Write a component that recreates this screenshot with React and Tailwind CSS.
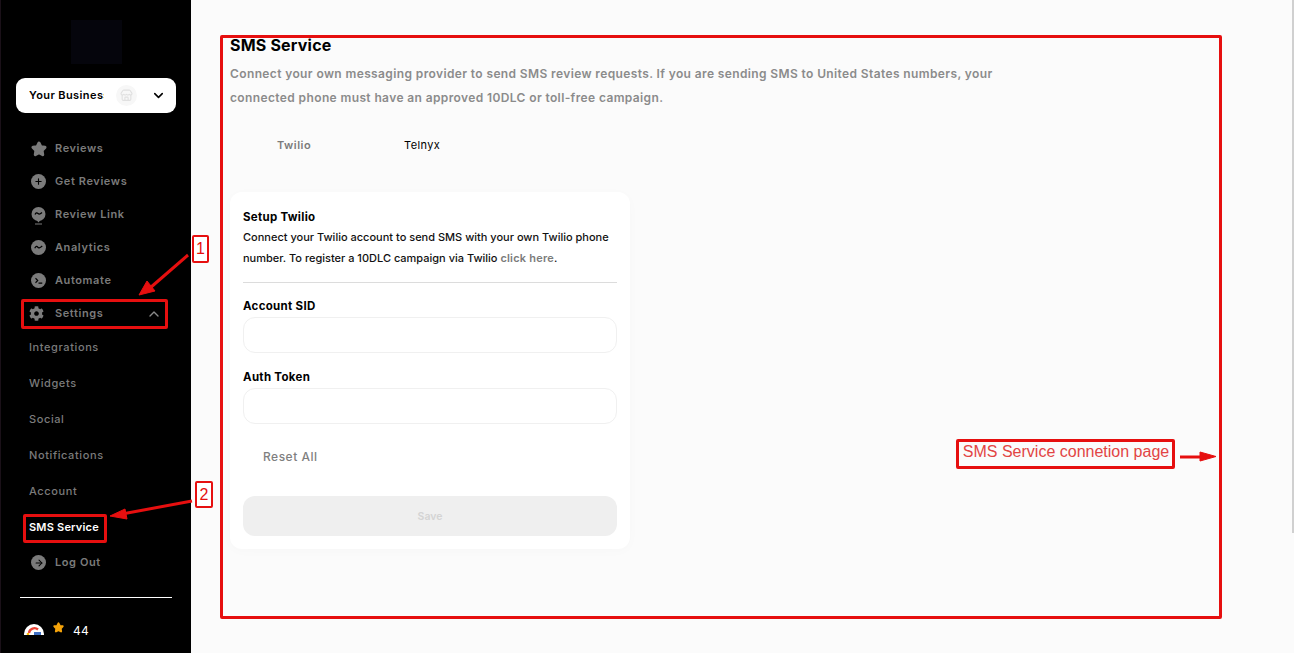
import React from "react";
import { ChevronDown, ChevronUp, Plus, ArrowRight, Store } from "lucide-react";
import { FaCog } from "react-icons/fa";

const font = "font-['Inter','Liberation_Sans',sans-serif]";

function Star({ size = 16, color = "#7b7b7b" }) {
  return (
    <svg width={size} height={size} viewBox="0 0 24 24">
      <path
        d="M12 3l2.800 5.500 6.200 1-4.400 4.500 1 6.500-5.600-2.900-5.600 2.900 1-6.500L3 9.500l6.200-1z"
        fill={color}
        stroke={color}
        strokeWidth="4.500"
        strokeLinejoin="round"
      />
    </svg>
  );
}

function Circle({ children }) {
  return (
    <span className="flex h-[15px] w-[15px] items-center justify-center rounded-full bg-[#7b7b7b] text-black">
      {children}
    </span>
  );
}

const wave = (
  <svg width="9" height="9" viewBox="0 0 12 12" fill="none" stroke="currentColor" strokeWidth="1.6">
    <path d="M1 7c1.500-3 3-3 4-1.500s2.500 1.500 6-1.500" />
  </svg>
);

const prompt = (
  <svg width="9" height="9" viewBox="0 0 12 12" fill="none" stroke="currentColor" strokeWidth="1.5">
    <path d="M2 3l3 3-3 3M6 9.500h5" />
  </svg>
);

// speech bubble with a small stem under it
const bubble = (
  <svg width="15" height="18" viewBox="0 0 15 18">
    <circle cx="7.500" cy="7" r="7" fill="#7b7b7b" />
    <path d="M5.500 13h4L7.500 15.500z" fill="#7b7b7b" />
    <path d="M4 17h7" stroke="#7b7b7b" strokeWidth="1" />
    <path d="M4 7.500c1-2 2-2 3-1s2 1 4-1" fill="none" stroke="#000" strokeWidth="1.200" />
  </svg>
);

const mainLinks = [
  { label: "Reviews", icon: <Star /> },
  { label: "Get Reviews", icon: <Circle><Plus size={9} strokeWidth={3} /></Circle> },
  { label: "Review Link", icon: bubble },
  { label: "Analytics", icon: <Circle>{wave}</Circle> },
  { label: "Automate", icon: <Circle>{prompt}</Circle> },
];

const subLinks = ["Integrations", "Widgets", "Social", "Notifications", "Account"];

function NavRow({ label, icon }) {
  return (
    <div className="flex h-[33px] items-center pl-[30px]">
      <span className="flex h-[15px] w-[24px] shrink-0 items-start">{icon}</span>
      <span className="text-[11px] font-semibold tracking-[0.6px] text-[#7b7b7b]">{label}</span>
    </div>
  );
}

function Sidebar() {
  return (
    <aside className="relative flex h-[653px] w-[191px] shrink-0 flex-col overflow-hidden border-l border-[#1a1018] bg-black">
      <div className="ml-[70px] mt-[20px] h-[44px] w-[51px] bg-[#05050c]" />
      <div className="ml-[15px] mt-[14px] flex h-[35px] w-[160px] items-center rounded-[9px] bg-white pl-[13px]">
        <span className="w-[75px] overflow-hidden whitespace-nowrap text-[11px] font-semibold tracking-[0.4px] text-black">
          Your Business
        </span>
        <span className="ml-[12px] flex h-[21px] w-[21px] items-center justify-center rounded-full bg-[#f7f7f7]">
          <Store size={13} className="text-[#e0e0e0]" />
        </span>
        <ChevronDown size={15} strokeWidth={2.5} className="ml-[14px] text-black" />
      </div>
      <nav className="mt-[19px] flex flex-col">
        {mainLinks.map((l) => (
          <NavRow key={l.label} {...l} />
        ))}
        <div className="flex h-[33px] items-center pl-[28px] pr-[29px]">
          <span className="flex w-[26px] shrink-0">
            <FaCog size={15} className="text-[#7b7b7b]" />
          </span>
          <span className="flex-1 text-[11px] font-semibold tracking-[0.6px] text-[#7b7b7b]">Settings</span>
          <ChevronUp size={16} strokeWidth={2} className="text-[#8a8a8a]" />
        </div>
        <div className="mt-[-2px] flex flex-col pl-[28px]">
          {subLinks.map((s) => (
            <div key={s} className="flex h-[36px] items-center pt-[3px] text-[11px] font-medium tracking-[0.6px] text-[#7b7b7b]">
              {s}
            </div>
          ))}
          <div className="flex h-[36px] items-center pt-[3px] text-[11px] font-semibold tracking-[0.2px] text-white">
            SMS Service
          </div>
        </div>
        <div className="mt-[2px]">
          <NavRow label="Log Out" icon={<Circle><ArrowRight size={10} strokeWidth={2.5} /></Circle>} />
        </div>
      </nav>
      <div className="ml-[19px] mt-[18px] h-px w-[152px] bg-white" />
      <div className="ml-[23px] mt-[26px] flex items-start">
        <div className="h-[11px] w-[20px] shrink-0 overflow-hidden">
          <svg width="20" height="20" viewBox="0 0 20 20" className="block">
            <circle cx="10" cy="10" r="10" fill="#fff" />
            <path d="M5 9a5.500 5.500 0 0 1 9-3.500" fill="none" stroke="#ea4335" strokeWidth="2.400" />
            <path d="M4 9v3" fill="none" stroke="#fbbc05" strokeWidth="2.400" />
            <rect x="10" y="8" width="7" height="3" fill="#3f6fc4" />
          </svg>
        </div>
        <span className="ml-[9px] mt-[-2px]"><Star size={11} color="#f5a30a" /></span>
        <span className="ml-[9px] mt-[-1px] text-[12px] font-normal leading-[16px] tracking-[0.3px] text-white">44</span>
      </div>
    </aside>
  );
}

function Field({ label, className }) {
  return (
    <div className={className}>
      <div className="text-[11.500px] font-bold leading-[16px] tracking-[0.3px] text-black">{label}</div>
      <div className="mt-[3px] h-[36px] rounded-[12px] border border-[#f0f0f0] bg-white" />
    </div>
  );
}

function Main() {
  return (
    <main className="min-w-0 flex-1 overflow-hidden bg-[#fbfbfb] pl-[39px] pt-[35px]">
      <h1 className="text-[16px] font-bold leading-[20px] tracking-[0.2px] text-black">SMS Service</h1>
      <p className="mt-[7px] w-[790px] text-[12px] font-semibold leading-[24px] tracking-[0.38px] text-[#8b8b8b]">
        Connect your own messaging provider to send SMS review requests. If you are sending SMS to United States numbers, your connected phone must have an approved 10DLC or toll-free campaign.
      </p>
      <div className="mt-[18px] flex h-[34px] items-center text-[11px]">
        <span className="ml-[47px] w-[127px] font-semibold tracking-[0.5px] text-[#7b7b7b]">Twilio</span>
        <span className="font-normal tracking-[0.4px] text-black">Telnyx</span>
      </div>
      <section className="mt-[30px] w-[400px] rounded-[12px] bg-white px-[13px] pb-[13px] pt-[17px] shadow-[0_2px_12px_rgba(0,0,0,0.02)]">
        <h2 className="text-[11.500px] font-bold leading-[16px] tracking-[0.3px] text-black">Setup Twilio</h2>
        <p className="mt-[2px] text-[11px] font-medium leading-[21px] text-[#111]">
          Connect your Twilio account to send SMS with your own Twilio phone number. To register a 10DLC campaign via Twilio{" "}
          <span className="font-semibold tracking-[0.2px] text-[#7b7b7b]">click here</span>.
        </p>
        <div className="mt-[13px] h-px bg-[#dcdcdc]" />
        <Field label="Account SID" className="mt-[15px]" />
        <Field label="Auth Token" className="mt-[16px]" />
        <div className="mt-[24px] pl-[20px] text-[12px] font-medium leading-[18px] tracking-[0.5px] text-[#7f7f7f]">Reset All</div>
        <div className="mt-[30px] flex h-[40px] items-center justify-center rounded-[12px] bg-[#efefef] pt-[1px] text-[10.500px] font-semibold text-[#d4d4d4]">
          Save
        </div>
      </section>
    </main>
  );
}

// the red markup drawn over the screenshot
function Annotations() {
  const red = "#e60f0f";
  return (
    <div className="pointer-events-none absolute inset-0">
      <div className="absolute left-[220px] top-[35px] h-[584px] w-[1002px] rounded-[2px] border-[3px] border-[#e60f0f]" />
      <div className="absolute left-[21px] top-[299px] h-[30px] w-[147px] rounded-[2px] border-[3px] border-[#e60f0f]" />
      <div className="absolute left-[23px] top-[514px] h-[29px] w-[84px] rounded-[2px] border-[3px] border-[#e60f0f]" />
      <div className="absolute left-[192px] top-[235px] flex h-[28px] w-[17px] items-center justify-center rounded-[2px] border-[2px] border-[#e60f0f] bg-white font-['Liberation_Sans',sans-serif] text-[16px] text-[#e60f0f]">1</div>
      <div className="absolute left-[195px] top-[481px] flex h-[27px] w-[18px] items-center justify-center rounded-[2px] border-[2px] border-[#e60f0f] bg-white font-['Liberation_Sans',sans-serif] text-[16px] text-[#e60f0f]">2</div>
      <div className="absolute left-[956px] top-[439px] flex h-[30px] w-[219px] items-start justify-center whitespace-nowrap rounded-[2px] border-[3px] border-[#e60f0f] pl-[1px] font-['Liberation_Sans',sans-serif] text-[16px] leading-[20px] text-[#e24444]">
        SMS Service connetion page
      </div>
      <svg width="1294" height="653" className="absolute left-0 top-0">
        <g fill={red} stroke={red}>
          <path d="M188 255L150 288" strokeWidth="3" />
          <path d="M139 295L147 281L155 291Z" strokeWidth="1" />
          <path d="M192 501L122 514" strokeWidth="3" />
          <path d="M110 516L125 509L127 519Z" strokeWidth="1" />
          <path d="M1180 457L1204 457" strokeWidth="3" />
          <path d="M1216 456.500L1200 452L1200 461Z" strokeWidth="1" />
        </g>
      </svg>
    </div>
  );
}

export default function App() {
  return (
    <div className={`relative flex h-[653px] w-[1294px] overflow-hidden ${font}`}>
      <Sidebar />
      <Main />
      <div className="absolute right-0 top-0 h-[533px] w-[2px] bg-[#d0d0d0]" />
      <Annotations />
    </div>
  );
}
